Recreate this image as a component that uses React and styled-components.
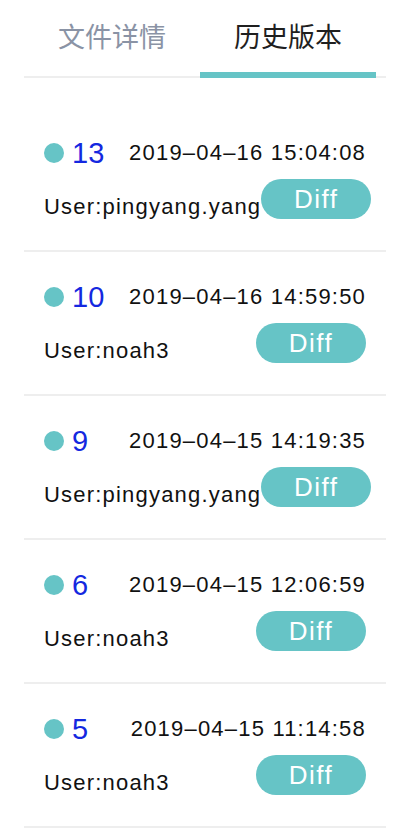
import React, { useState } from "react";
import styled, { createGlobalStyle } from "styled-components";

const versions = [
  { id: 13, time: "2019–04–16 15:04:08", user: "pingyang.yang" },
  { id: 10, time: "2019–04–16 14:59:50", user: "noah3" },
  { id: 9, time: "2019–04–15 14:19:35", user: "pingyang.yang" },
  { id: 6, time: "2019–04–15 12:06:59", user: "noah3" },
  { id: 5, time: "2019–04–15 11:14:58", user: "noah3" },
];

function App() {
  const [tab, setTab] = useState(1);
  return (
    <Wrapper>
      <GlobalStyle />
      <TabBar>
        {["文件详情", "历史版本"].map((label, i) => (
          <Tab key={label} active={tab === i} onClick={() => setTab(i)}>
            {label}
          </Tab>
        ))}
      </TabBar>
      <List>
        {versions.map((v) => (
          <Item key={v.id}>
            <TopRow>
              <Dot />
              <Version>{v.id}</Version>
              <Time>{v.time}</Time>
            </TopRow>
            <BottomRow>
              <User>User:{v.user}</User>
              <DiffButton>Diff</DiffButton>
            </BottomRow>
          </Item>
        ))}
      </List>
    </Wrapper>
  );
}

const GlobalStyle = createGlobalStyle`
  body {
    margin: 0;
    background: #ffffff;
    font-family: "Liberation Sans", "Noto Sans CJK SC", sans-serif;
  }
`;

const Wrapper = styled.div`
  width: 404px;
  min-height: 830px;
  background: #ffffff;
`;

const TabBar = styled.div`
  display: flex;
  height: 76px;
  margin: 0 18px 0 24px;
  border-bottom: 2px solid #eeeeee;
`;

const Tab = styled.div`
  width: 176px;
  height: 78px;
  margin-bottom: -2px;
  box-sizing: border-box;
  display: flex;
  align-items: center;
  justify-content: center;
  padding-bottom: 2px;
  font-family: "Noto Sans CJK SC", sans-serif;
  font-size: 27px;
  color: ${(p) => (p.active ? "#1f1f1f" : "#8a93a5")};
  border-bottom: 6px solid ${(p) => (p.active ? "#66c4c6" : "transparent")};
  cursor: pointer;
`;

const List = styled.div`
  padding-top: 30px;
`;

const Item = styled.div`
  margin: 0 18px 0 24px;
  padding: 25px 20px 31px 20px;
  border-bottom: 2px solid #eeeeee;
`;

const TopRow = styled.div`
  display: flex;
  align-items: center;
  height: 40px;
`;

const Dot = styled.span`
  width: 20px;
  height: 20px;
  border-radius: 50%;
  background: #66c4c6;
  flex-shrink: 0;
`;

const Version = styled.span`
  margin-left: 8px;
  font-size: 29px;
  color: #1428e0;
`;

const Time = styled.span`
  margin-left: auto;
  font-size: 22px;
  letter-spacing: 1.2px;
  color: #111111;
  white-space: nowrap;
`;

const BottomRow = styled.div`
  display: flex;
  justify-content: space-between;
  align-items: flex-end;
  margin-top: 6px;
  height: 40px;
`;

const User = styled.span`
  font-size: 22px;
  line-height: 24px;
  letter-spacing: 1.2px;
  color: #111111;
  white-space: nowrap;
`;

const DiffButton = styled.button`
  flex-shrink: 0;
  width: 110px;
  height: 40px;
  border: none;
  border-radius: 20px;
  background: #66c4c6;
  color: #ffffff;
  font-family: "Liberation Sans", sans-serif;
  font-size: 26px;
  letter-spacing: 1.5px;
  padding: 0;
  cursor: pointer;
`;

export default App;
